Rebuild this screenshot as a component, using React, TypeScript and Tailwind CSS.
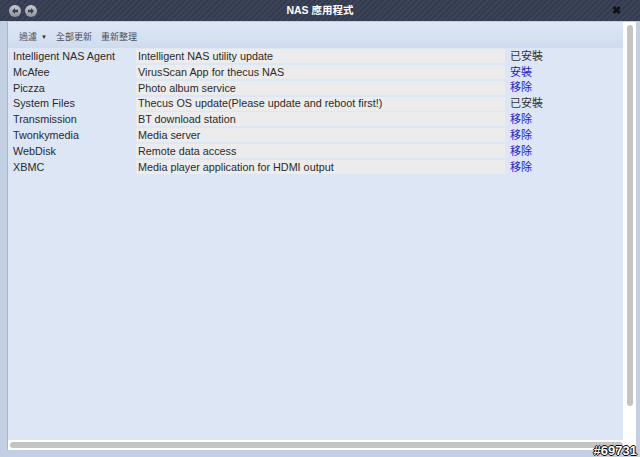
import React from 'react';

interface AppRow {
    name: string;
    desc: string;
    action: string;
    installed: boolean;
}

const rows: AppRow[] = [
    { name: 'Intelligent NAS Agent', desc: 'Intelligent NAS utility update', action: '已安裝', installed: true },
    { name: 'McAfee', desc: 'VirusScan App for thecus NAS', action: '安裝', installed: false },
    { name: 'Piczza', desc: 'Photo album service', action: '移除', installed: false },
    { name: 'System Files', desc: 'Thecus OS update(Please update and reboot first!)', action: '已安裝', installed: true },
    { name: 'Transmission', desc: 'BT download station', action: '移除', installed: false },
    { name: 'Twonkymedia', desc: 'Media server', action: '移除', installed: false },
    { name: 'WebDisk', desc: 'Remote data access', action: '移除', installed: false },
    { name: 'XBMC', desc: 'Media player application for HDMI output', action: '移除', installed: false },
];

const font = { fontFamily: '"Liberation Sans", "Noto Sans CJK TC", sans-serif' };

const RoundButton = ({ dir }: { dir: 'left' | 'right' }) => (
    <div className="w-[12px] h-[12px] rounded-full bg-gradient-to-b from-[#c9ccd2] to-[#8e939c] flex items-center justify-center">
        <svg width="8" height="8" viewBox="0 0 8 8">
            {dir === 'left' ? (
                <path d="M1 4 L4 1 L4 2.8 L7 2.8 L7 5.2 L4 5.2 L4 7 Z" fill="#3b3f48" />
            ) : (
                <path d="M7 4 L4 1 L4 2.8 L1 2.8 L1 5.2 L4 5.2 L4 7 Z" fill="#3b3f48" />
            )}
        </svg>
    </div>
);

export default function App() {
    return (
        <div className="relative w-[640px] h-[457px] bg-[#c3d0e3] flex flex-col overflow-hidden" style={font}>
            {/* title bar */}
            <div className="h-[21px] flex items-center px-[9px] bg-[repeating-linear-gradient(135deg,#3c4459_0px,#3c4459_2px,#343b4e_2px,#343b4e_4px)] relative shrink-0">
                <div className="flex gap-[4px]">
                    <RoundButton dir="left" />
                    <RoundButton dir="right" />
                </div>
                <div className="absolute left-0 right-0 top-0 h-[21px] flex items-center justify-center text-white font-bold text-[10.5px]">
                    NAS 應用程式
                </div>
                <div className="ml-auto mr-[10px] text-[#111] text-[11px] leading-none font-bold">✖</div>
            </div>

            {/* window body */}
            <div className="flex-1 flex pl-[7px] pr-[4px] pb-[7px] pt-[1px]">
                <div className="flex-1 flex flex-col border-l border-[#a9b7cc]">
                    <div className="flex-1 flex">
                        <div className="flex-1 flex flex-col bg-[#dde6f5]">
                            {/* toolbar */}
                            <div className="mt-[5px] h-[21px] bg-gradient-to-b from-[#dbe5f3] to-[#cfdcee] flex items-center text-[9px] text-[#4a4f58] pl-[11px] gap-[9px]">
                                <span className="flex items-center gap-[4px]">
                                    過濾 <span className="text-[6px] text-[#2a2f3a]">▼</span>
                                </span>
                                <span>全部更新</span>
                                <span>重新整理</span>
                            </div>
                            {/* list */}
                            <div className="flex flex-col text-[10.8px] text-[#2a2a2a]">
                                {rows.map((r) => (
                                    <div key={r.name} className="h-[15.86px] flex items-center">
                                        <div className="w-[128px] pl-[5px] whitespace-nowrap">{r.name}</div>
                                        <div className="w-[369px] h-[14px] bg-[#ececec] flex items-center pl-[2px] whitespace-nowrap">{r.desc}</div>
                                        <div className={`pl-[5px] text-[11px] ${r.installed ? 'text-[#333]' : 'text-[#1c1cd0]'}`}>{r.action}</div>
                                    </div>
                                ))}
                            </div>
                        </div>
                        {/* vertical scrollbar */}
                        <div className="w-[13px] bg-white flex justify-center pt-[3px] pb-[34px]">
                            <div className="w-[6px] h-full rounded-full bg-[#c4c4c4]" />
                        </div>
                    </div>
                    {/* horizontal scrollbar */}
                    <div className="h-[10px] bg-white flex items-center pl-[2px] pr-[13px]">
                        <div className="h-[6px] w-full rounded-full bg-[#c4c4c4]" />
                    </div>
                </div>
            </div>

            <div className="absolute right-[3px] bottom-[0px] text-white font-bold text-[13px] leading-none [text-shadow:1px_0_0_#000,-1px_0_0_#000,0_1px_0_#000,0_-1px_0_#000]">
                #69731
            </div>
        </div>
    );
}
